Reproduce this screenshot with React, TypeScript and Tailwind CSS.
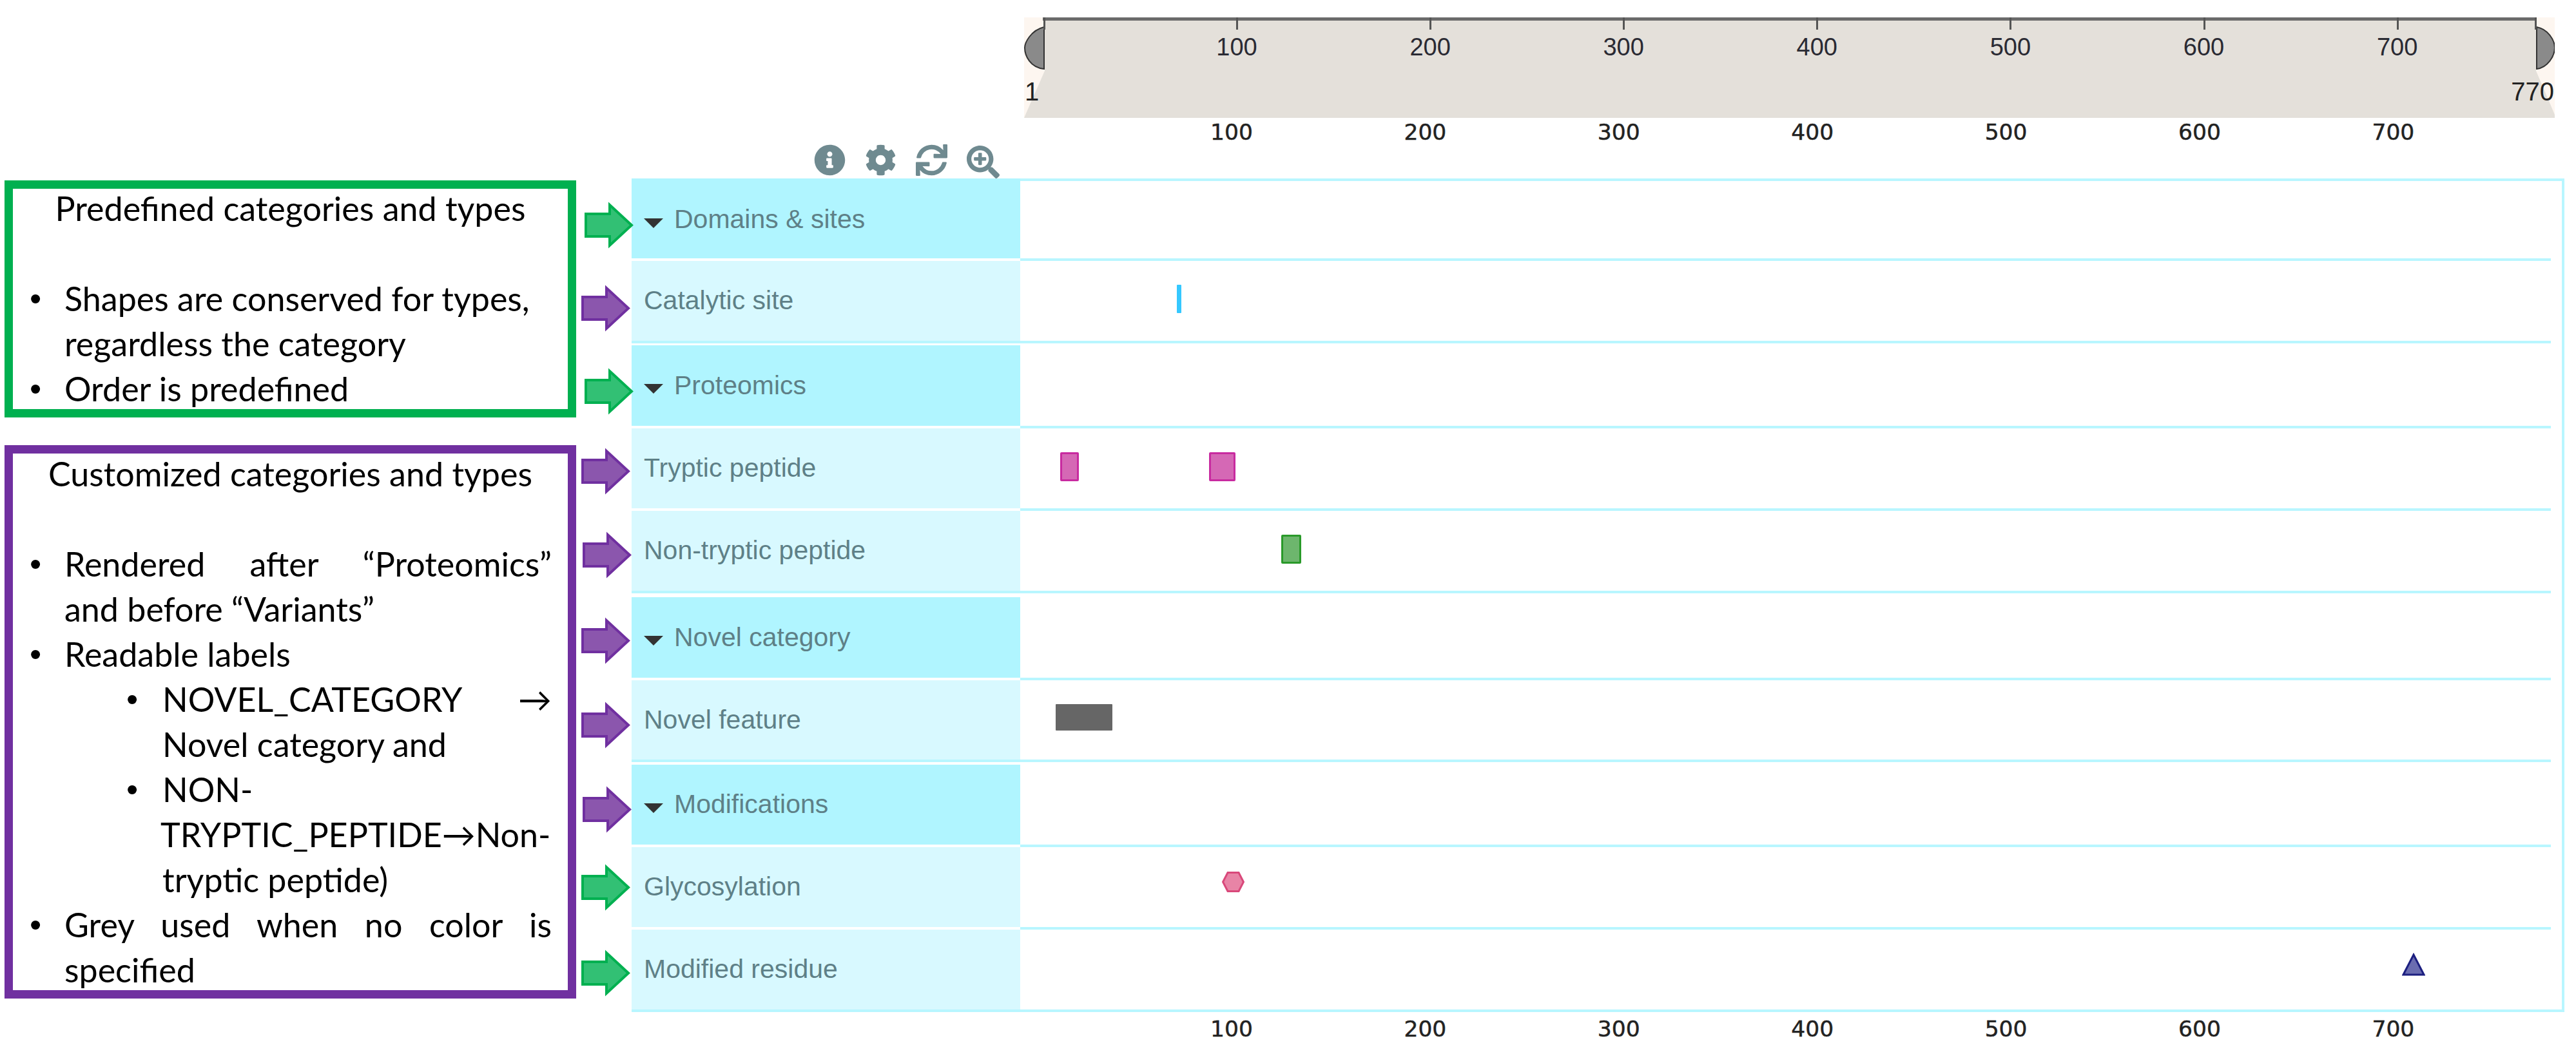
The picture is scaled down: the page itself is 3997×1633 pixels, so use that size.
import React from "react";
import { FaInfoCircle, FaCog, FaSync, FaSearchPlus } from "react-icons/fa";

const TICKS = [100, 200, 300, 400, 500, 600, 700];

type Feature = { kind: "rect" | "hex" | "tri" | "bar"; left: number; top: number; w: number; h: number; cls?: string };
type Row = { label: string; header: boolean; h: number; sep: "white" | "cyan"; gap?: string; full?: boolean; features?: Feature[] };

const PINK = "bg-[#d568b5] border-[3px] border-[#c82ba0] rounded-[2px]";
const ROWS: Row[] = [
  { label: "Domains & sites", header: true, h: 124, sep: "white" },
  { label: "Catalytic site", header: false, h: 124, sep: "cyan", gap: "mb-[3px]", features: [{ kind: "bar", left: 243, top: 37, w: 7, h: 44, cls: "bg-[#35c8ff] rounded-[1px]" }] },
  { label: "Proteomics", header: true, h: 125, sep: "white" },
  { label: "Tryptic peptide", header: false, h: 124, sep: "white", features: [
    { kind: "rect", left: 62, top: 37, w: 29, h: 45, cls: PINK },
    { kind: "rect", left: 293, top: 37, w: 41, h: 45, cls: PINK },
  ] },
  { label: "Non-tryptic peptide", header: false, h: 124, sep: "cyan", gap: "mb-[6px]", features: [{ kind: "rect", left: 405, top: 37, w: 31, h: 45, cls: "bg-[#6db66d] border-[3px] border-[#2a9a2a] rounded-[2px]" }] },
  { label: "Novel category", header: true, h: 125, sep: "white" },
  { label: "Novel feature", header: false, h: 123, sep: "cyan", gap: "mb-[4px]", features: [{ kind: "rect", left: 55, top: 37, w: 88, h: 41, cls: "bg-[#666666] rounded-[1px]" }] },
  { label: "Modifications", header: true, h: 124, sep: "white" },
  { label: "Glycosylation", header: false, h: 124, sep: "white", features: [{ kind: "hex", left: 313, top: 38, w: 35, h: 32 }] },
  { label: "Modified residue", header: false, h: 124, sep: "cyan", full: true, features: [{ kind: "tri", left: 2144, top: 36, w: 36, h: 36 }] },
];

const ARROWS: { c: "g" | "p"; cls: string }[] = [
  { c: "g", cls: "mt-[311px] ml-[13px]" },
  { c: "p", cls: "mt-[52px] ml-[8px]" },
  { c: "g", cls: "mt-[52px] ml-[13px]" },
  { c: "p", cls: "mt-[47px] ml-[8px]" },
  { c: "p", cls: "mt-[53px] ml-[10px]" },
  { c: "p", cls: "mt-[56px] ml-[8px]" },
  { c: "p", cls: "mt-[54px] ml-[8px]" },
  { c: "p", cls: "mt-[54px] ml-[10px]" },
  { c: "g", cls: "mt-[44px] ml-[8px]" },
  { c: "g", cls: "mt-[56px] ml-[8px]" },
];

function BlockArrow({ c, cls }: { c: "g" | "p"; cls: string }) {
  return (
    <svg viewBox="0 0 76 77" className={`w-[76px] h-[77px] shrink-0 overflow-visible ${cls}`}>
      <polygon
        points="2,21 39,21 39,7 73,38.5 39,70 39,56 2,56"
        fill={c === "g" ? "#32c074" : "#8b56ad"}
        stroke={c === "g" ? "#00b050" : "#7030a0"}
        strokeWidth="4"
      />
    </svg>
  );
}

function Bullet({ level = 1, justify, children, nudge }: { level?: 1 | 2; justify?: boolean; children: React.ReactNode; nudge?: boolean }) {
  return (
    <div className={`flex h-[70px] pr-[25px] ${level === 1 ? "pl-[26px]" : "pl-[176px]"}`}>
      <span className={`shrink-0 font-['Liberation_Sans'] ${level === 1 ? "w-[54px]" : "w-[56px]"}`}>•</span>
      <span className={`flex-1 whitespace-nowrap ${justify ? "[text-align:justify] [text-align-last:justify]" : ""} ${nudge ? "-ml-[3px]" : ""}`}>{children}</span>
    </div>
  );
}

function Plain({ level = 1, children, nudge }: { level?: 1 | 2; children?: React.ReactNode; nudge?: boolean }) {
  return (
    <div className={`h-[70px] pr-[25px] whitespace-nowrap ${level === 1 ? "pl-[80px]" : nudge ? "pl-[229px]" : "pl-[232px]"}`}>{children}</div>
  );
}

function Feat({ f }: { f: Feature }) {
  if (f.kind === "hex") {
    return (
      <svg viewBox="0 0 35 32" className="absolute w-[35px] h-[32px]" style={{ left: f.left, top: f.top }}>
        <polygon points="9,1.5 26,1.5 33.5,16 26,30.5 9,30.5 1.5,16" fill="#e884a6" stroke="#d9487a" strokeWidth="3" />
      </svg>
    );
  }
  if (f.kind === "tri") {
    return (
      <svg viewBox="0 0 36 36" className="absolute w-[36px] h-[36px]" style={{ left: f.left, top: f.top }}>
        <polygon points="18,3 34,34 2,34" fill="#6a6cb0" stroke="#1c1f80" strokeWidth="3" />
      </svg>
    );
  }
  return <div className={`absolute ${f.cls}`} style={{ left: f.left, top: f.top, width: f.w, height: f.h }} />;
}

function TrackRow({ r, first }: { r: Row; first: boolean }) {
  return (
    <div className={r.gap}>
      <div className="flex" style={{ height: r.h }}>
        <div className={`w-[603px] shrink-0 flex items-center text-[41px] text-[#5e8087] font-['Liberation_Sans'] ${first ? "pt-[4px]" : ""} ${r.header ? "bg-[#b0f5ff] pl-[19px]" : "bg-[#d8f9ff] pl-[19px]"}`}>
          {r.header && (
            <svg viewBox="0 0 30 15" className="w-[30px] h-[15px] mr-[17px] mt-[10px] shrink-0">
              <polygon points="0,0 30,0 15,15" fill="#333333" />
            </svg>
          )}
          <span className="whitespace-nowrap">{r.label}</span>
        </div>
        <div className="flex-1 relative">{r.features?.map((f, i) => <Feat key={i} f={f} />)}</div>
      </div>
      <div className="flex h-[4px]">
        <div className={`w-[603px] shrink-0 ${r.sep === "cyan" ? "bg-[#b8f6ff]" : "bg-white"}`} />
        <div className={`${r.full ? "flex-1" : "w-[2375px]"} bg-[#b8f6ff]`} />
      </div>
    </div>
  );
}

function Axis({ cls }: { cls: string }) {
  return (
    <div className={`relative h-[26px] font-['DejaVu_Sans'] text-[34.5px] leading-[26px] text-[#222222] [-webkit-text-stroke:0.5px_#222222] ${cls}`}>
      {TICKS.map((v) => (
        <span key={v} className="absolute -translate-x-1/2" style={{ left: 931 + (v - 100) * 3.004 }}>
          {v}
        </span>
      ))}
    </div>
  );
}

function Ruler() {
  return (
    <div className="relative ml-[609px] mt-[27px] w-[2375px] h-[156px] bg-[#e4e0da] font-['Liberation_Sans'] text-[#2a2a33]">
      <svg viewBox="0 0 32 156" className="absolute left-0 top-0 w-[32px] h-[156px]">
        <polygon points="0,0 32,0 32,83 0,156" fill="#fdf6f0" />
        <path d="M31,15 C10,20 1,40 1,47 C1,60 10,78 31,80 Z" fill="#8a8a8a" stroke="#333333" strokeWidth="2" />
      </svg>
      <svg viewBox="0 0 29 156" className="absolute right-0 top-0 w-[29px] h-[156px]">
        <polygon points="0,0 29,0 29,151 0,83" fill="#fdf6f0" />
        <path d="M1,15 C18,18 29,35 29,47 C29,60 18,78 1,80 Z" fill="#8a8a8a" stroke="#333333" strokeWidth="2" />
      </svg>
      <div className="absolute left-[29px] right-[29px] top-0 h-[5px] bg-[#6b6b6b]" />
      <div className="absolute left-[30px] top-0 w-[3px] h-[19px] bg-[#555555]" />
      <div className="absolute right-[28px] top-0 w-[3px] h-[19px] bg-[#555555]" />
      {TICKS.map((v) => (
        <div key={v} className="absolute top-0 w-[3px] h-[19px] bg-[#555555]" style={{ left: 329 + (v - 100) * 3.001 }} />
      ))}
      {TICKS.map((v) => (
        <span key={v} className="absolute top-[24px] -translate-x-1/2 text-[38px] leading-[44px]" style={{ left: 330 + (v - 100) * 3.001 }}>
          {v}
        </span>
      ))}
      <span className="absolute left-[1px] top-[92px] text-[40px] leading-[46px] text-[#222222]">1</span>
      <span className="absolute right-[1px] top-[92px] text-[40px] leading-[46px] text-[#222222]">770</span>
    </div>
  );
}

export default function App() {
  return (
    <div className="flex w-[3997px] h-[1633px] bg-white overflow-hidden">
      <div className="w-[894px] shrink-0 ml-[7px] -mr-[7px] pt-[280px] font-['Lato'] text-[52px] leading-[70px] text-black" style={{ marginRight: 0, width: 887 }}>
        <div className="h-[368px] border-[13px] border-[#00b050] overflow-hidden">
          <div className="-mt-[5px]">
            <div className="h-[70px] text-center whitespace-nowrap">Predefined categories and types</div>
            <div className="h-[70px]" />
            <Bullet>Shapes are conserved for types,</Bullet>
            <Plain>regardless the category</Plain>
            <Bullet>Order is predefined</Bullet>
          </div>
        </div>
        <div className="mt-[43px] h-[859px] border-[13px] border-[#7030a0] overflow-hidden">
          <div className="mt-[-4px]">
            <div className="h-[70px] text-center whitespace-nowrap">Customized categories and types</div>
            <div className="h-[70px]" />
            <Bullet justify>Rendered after “Proteomics”</Bullet>
            <Plain>and before “Variants”</Plain>
            <Bullet>Readable labels</Bullet>
            <Bullet level={2} justify>
              <span>NOVEL_CATEGORY</span> <span>→</span>
            </Bullet>
            <Plain level={2}>Novel category and</Plain>
            <Bullet level={2}>NON-</Bullet>
            <Plain level={2} nudge>TRYPTIC_PEPTIDE→Non-</Plain>
            <Plain level={2}>tryptic peptide)</Plain>
            <Bullet justify>Grey used when no color is</Bullet>
            <Plain>specified</Plain>
          </div>
        </div>
      </div>
      <div className="w-[86px] shrink-0 flex flex-col relative z-10 overflow-visible">
        {ARROWS.map((a, i) => (
          <BlockArrow key={i} c={a.c} cls={a.cls} />
        ))}
      </div>
      <div className="w-[2999px] shrink-0 flex flex-col">
        <Ruler />
        <Axis cls="mt-[9px]" />
        <div className="flex gap-[30px] pl-[283px] mt-[6px] h-[53px] text-[#6f8a90]">
          <FaInfoCircle className="w-[49px] h-[49px]" />
          <FaCog className="w-[49px] h-[49px]" />
          <FaSync className="w-[49px] h-[49px]" />
          <FaSearchPlus className="w-[51px] h-[51px] mt-[2px]" />
        </div>
        <div className="border-r-[4px] border-[#b8f6ff] relative">
          <div className="absolute left-[603px] right-0 top-0 h-[4px] bg-[#b8f6ff]" />
          {ROWS.map((r, i) => (
            <TrackRow key={r.label} r={r} first={i === 0} />
          ))}
        </div>
        <Axis cls="mt-[13px]" />
      </div>
    </div>
  );
}
